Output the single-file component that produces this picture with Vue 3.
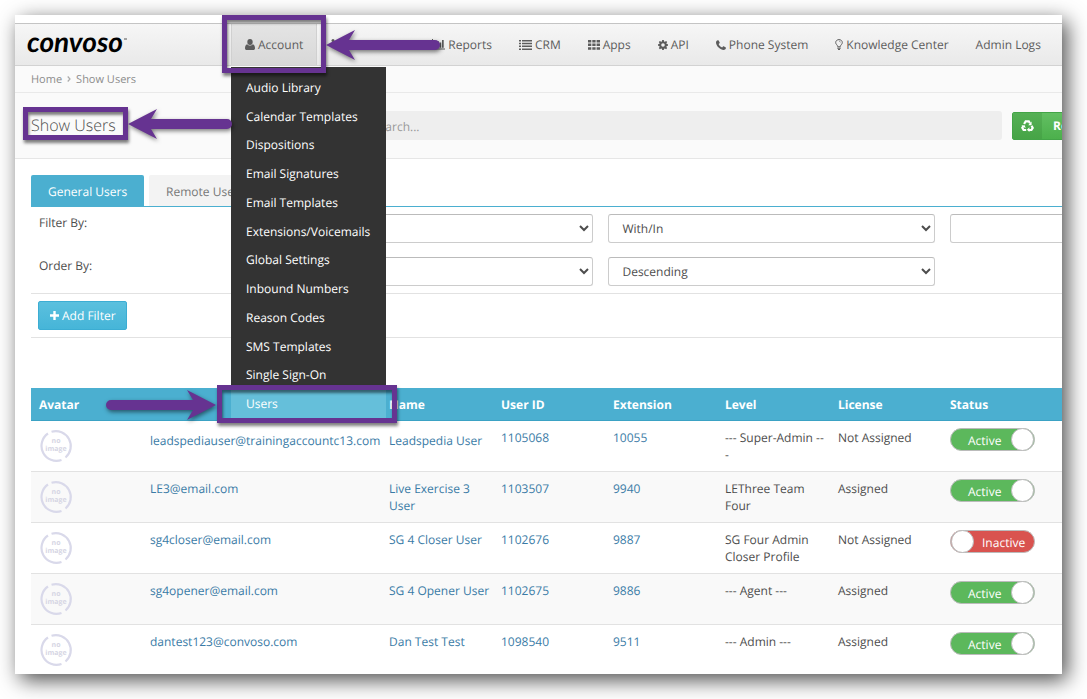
<script setup>
import { reactive } from 'vue'

const navItems = [
  { icon: 'user', label: 'Account', kind: 'current' },
  { icon: 'signal', label: '', kind: 'blank' },
  { icon: 'chart', label: 'Reports' },
  { icon: 'list', label: 'CRM' },
  { icon: 'grid', label: 'Apps' },
  { icon: 'gear', label: 'API' },
  { icon: 'phone', label: 'Phone System' },
  { icon: 'bulb', label: 'Knowledge Center' },
  { icon: '', label: 'Admin Logs' },
]

const menuItems = [
  'Audio Library',
  'Calendar Templates',
  'Dispositions',
  'Email Signatures',
  'Email Templates',
  'Extensions/Voicemails',
  'Global Settings',
  'Inbound Numbers',
  'Reason Codes',
  'SMS Templates',
  'Single Sign-On',
  'Users',
]

const users = reactive([
  { email: 'leadspediauser@trainingaccountc13.com', name: 'Leadspedia User', id: '1105068', ext: '10055', level: '--- Super-Admin ---', license: 'Not Assigned', active: true, owner: true },
  { email: 'LE3@email.com', name: 'Live Exercise 3 User', id: '1103507', ext: '9940', level: 'LEThree Team Four', license: 'Assigned', active: true },
  { email: 'sg4closer@email.com', name: 'SG 4 Closer User', id: '1102676', ext: '9887', level: 'SG Four Admin Closer Profile', license: 'Not Assigned', active: false },
  { email: 'sg4opener@email.com', name: 'SG 4 Opener User', id: '1102675', ext: '9886', level: '--- Agent ---', license: 'Assigned', active: true },
  { email: 'dantest123@convoso.com', name: 'Dan Test Test', id: '1098540', ext: '9511', level: '--- Admin ---', license: 'Assigned', active: true },
])
</script>

<template>
  <div class="stage">
    <div class="window">
      <header class="navbar">
        <a class="brand" href="#">
          <svg width="104" height="30" viewBox="0 0 104 30" role="img" aria-label="convoso">
            <text class="brand-word" x="0" y="21">convoso</text>
            <path d="M97 8h3" stroke="#555" stroke-width="1" />
          </svg>
        </a>
        <nav class="nav">
          <a v-for="(item, i) in navItems" :key="i" href="#" class="nav-item" :class="item.kind">
            <svg v-if="item.icon === 'user'" width="10" height="11" viewBox="0 0 10 11"><ellipse cx="5" cy="3" rx="2.7" ry="3" /><path d="M2.2 5.2C.6 5.6 0 7.3 0 9.2 0 10.300 .7 11 1.700 11h6.600C9.300 11 10 10.300 10 9.200 10 7.300 9.400 5.600 7.800 5.200 6.500 7 3.500 7 2.200 5.200z" /></svg>
            <svg v-else-if="item.icon === 'signal'" width="10" height="11" viewBox="0 0 10 11"><circle cx="2" cy="1.500" r="1.500" /></svg>
            <svg v-else-if="item.icon === 'chart'" width="13" height="11" viewBox="0 0 13 11"><path d="M0 0h1v9.500h12v1H0zM2.500 5h1.700v3.700H2.500zM5 2h1.700v6.700H5zM7.500 3.500h1.700v5.200H7.500zM10 1h1.700v7.700H10z" /></svg>
            <svg v-else-if="item.icon === 'list'" width="13" height="10" viewBox="0 0 13 10"><path d="M0 0h2v1.500H0zM3 0h10v1.500H3zM0 2.800h2v1.500H0zM3 2.800h10v1.500H3zM0 5.600h2v1.500H0zM3 5.600h10v1.500H3zM0 8.400h2v1.500H0zM3 8.400h10v1.500H3z" /></svg>
            <svg v-else-if="item.icon === 'grid'" width="12" height="10" viewBox="0 0 12 10"><path d="M0 0h3.300v2.500H0zM4.300 0h3.300v2.500H4.300zM8.600 0H12v2.500H8.600zM0 3.600h3.300v2.500H0zM4.300 3.600h3.300v2.500H4.300zM8.600 3.600H12v2.500H8.600zM0 7.200h3.300v2.500H0zM4.300 7.200h3.300v2.500H4.300zM8.600 7.200H12v2.500H8.600z" /></svg>
            <svg v-else-if="item.icon === 'gear'" width="10" height="10" viewBox="0 0 10 10"><path fill-rule="evenodd" d="M4.200 0h1.600l.3 1.400.8.300L8.100.900l1.100 1.100-.8 1.200.3.800 1.300.3v1.500l-1.300.3-.3.800.8 1.200-1.100 1.100-1.200-.8-.8.300L5.800 10H4.200l-.3-1.300-.8-.3-1.200.8L.8 8.100l.8-1.200-.3-.8L0 5.800V4.300L1.300 4l.3-.8L.8 2 1.900.900l1.200.8.8-.3zM5 3.200a1.800 1.800 0 1 0 0 3.600 1.800 1.800 0 0 0 0-3.600z" /></svg>
            <svg v-else-if="item.icon === 'phone'" width="10" height="10" viewBox="0 0 10 10"><path d="M1.800.2C.8.400 0 1.300 0 2.400 0 3.900 1.100 6 2.600 7.500 4.100 9 6.100 10 7.600 10c1.100 0 2-.7 2.300-1.700.1-.4.100-.6-.1-.8L7.700 6.300c-.3-.1-.5 0-.7.200l-.8 1c-1.500-.7-2.900-2-3.600-3.600l.9-.7c.3-.2.3-.5.200-.8L2.600.5C2.400.100 2.200.100 1.800.2z" /></svg>
            <svg v-else-if="item.icon === 'bulb'" width="8" height="11" viewBox="0 0 8 11"><path d="M2.600 7.300C2.500 5.900.7 5.400.7 3.500.7 1.800 2.200.6 4 .6s3.300 1.200 3.300 2.900c0 1.900-1.800 2.400-1.900 3.800" fill="none" stroke="#5c5c5c" /><path d="M2.300 7.200h3.400v1H2.300zM2.300 8.700h3.400v1H2.300zM3 10h2v1H3z" /><path d="M4 2.200c.8 0 1.500.5 1.500 1.200" fill="none" stroke="#5c5c5c" stroke-width=".6" /></svg>
            <span v-if="item.label">{{ item.label }}</span>
          </a>
        </nav>
      </header>

      <ul class="dropdown">
        <li v-for="item in menuItems" :key="item">
          <a href="#" :class="{ chosen: item === 'Users' }">{{ item }}</a>
        </li>
      </ul>

      <nav class="crumbs">
        <a href="#">Home</a>
        <svg width="4" height="6" viewBox="0 0 4 6"><path d="M.700.500 3 3 .700 5.500" fill="none" stroke="#aaa" stroke-width="1.200" /></svg>
        <a href="#">Show Users</a>
      </nav>

      <section class="page-head">
        <h1>Show Users</h1>
        <input class="search" type="text" placeholder="Search..." aria-label="Search" />
        <div class="refresh-slot">
          <button class="refresh" type="button">
            <span class="refresh-icon">
              <svg width="13" height="12" viewBox="0 0 13 12"><g fill="none" stroke="#fff" stroke-width="2.200"><path d="M3.100 4 4.700 1.300H7.800L9 3.300" /><path d="M10.600 5.800 11.700 7.900 10.400 10H7.600" /><path d="M5.200 10H2.600L1.300 7.800 2.400 6" /></g><path d="M10.600 1.600v3.600H7.200zM8.400 7.300V12L5.900 9.800zM.3 5.400l3.400-.2 1 3z" fill="#fff" /></svg>
            </span>
            <span class="refresh-text">Refresh</span>
          </button>
        </div>
      </section>

      <main class="content">
        <div class="tabs">
          <button type="button" class="tab on">General Users</button>
          <button type="button" class="tab">Remote Users</button>
        </div>

        <form class="filters" @submit.prevent>
          <div class="filter-row">
            <label for="filter-field">Filter By:</label>
            <select id="filter-field"><option></option></select>
            <select aria-label="Filter match"><option>With/In</option></select>
            <input type="text" aria-label="Filter value" />
          </div>
          <div class="filter-row">
            <label for="order-field">Order By:</label>
            <select id="order-field"><option></option></select>
            <select aria-label="Order direction"><option>Descending</option></select>
          </div>
          <div class="filter-actions">
            <button type="button" class="add">
              <svg width="9" height="9" viewBox="0 0 9 9"><path d="M3.300 0h2.400v3.300H9v2.400H5.700V9H3.300V5.700H0V3.300h3.300z" fill="#fff" /></svg>
              Add Filter
            </button>
          </div>
        </form>

        <table>
          <colgroup>
            <col class="c-avatar" /><col class="c-email" /><col class="c-std" /><col class="c-std" /><col class="c-std" /><col class="c-level" /><col class="c-std" /><col />
          </colgroup>
          <thead>
            <tr><th>Avatar</th><th></th><th>Name</th><th>User ID</th><th>Extension</th><th>Level</th><th>License</th><th>Status</th></tr>
          </thead>
          <tbody>
            <tr v-for="u in users" :key="u.id" :class="{ owner: u.owner }">
              <td>
                <svg class="avatar" width="34" height="34" viewBox="0 0 34 34" role="img" aria-label="no image">
                  <g fill="none" stroke="#d9d9ea" stroke-width="2.200">
                    <path d="M12.500 2.700A15 15 0 0 1 26.500 28.500" />
                    <path d="M22.500 31A15 15 0 0 1 9 4.500" />
                  </g>
                  <text x="17" y="14">no</text>
                  <text x="17" y="22">image</text>
                </svg>
              </td>
              <td class="key"><a href="#">{{ u.email }}</a></td>
              <td class="key"><a href="#">{{ u.name }}</a></td>
              <td><a href="#">{{ u.id }}</a></td>
              <td><a href="#">{{ u.ext }}</a></td>
              <td>{{ u.level }}</td>
              <td>{{ u.license }}</td>
              <td class="status">
                <label class="toggle" :class="{ off: !u.active }">
                  <input v-model="u.active" type="checkbox" />
                  <span>{{ u.active ? 'Active' : 'Inactive' }}</span>
                  <i></i>
                </label>
              </td>
            </tr>
          </tbody>
        </table>
      </main>
    </div>

    <div class="mark mark-account"></div>
    <div class="mark mark-title"></div>
    <div class="mark mark-users"></div>
    <svg class="arrow arrow-account" width="116" height="32" viewBox="0 0 116 32"><path d="M0 15 29 0 23 10H109a5 5 0 0 1 0 10H23L29 30z" /></svg>
    <svg class="arrow arrow-title" width="106" height="32" viewBox="0 0 106 32"><path d="M0 15 29 0 23 10H99a5 5 0 0 1 0 10H23L29 30z" /></svg>
    <svg class="arrow arrow-users" width="112" height="32" viewBox="0 0 112 32"><path d="M110 15 81 0 87 10H5a5 5 0 0 0 0 10H87L81 30z" /></svg>
  </div>
</template>

<style>
body {
  margin: 0;
  background: #fff;
}
</style>

<style scoped>
* {
  box-sizing: border-box;
}
.stage {
  position: relative;
  height: 100vh;
  padding: 15px 25px 25px 15px;
  overflow: hidden;
  font: 12px/17px "Open Sans", "Noto Sans", sans-serif;
  text-rendering: geometricPrecision;
  color: #4d4d4d;
}
a {
  text-decoration: none;
  color: #3a7ba6;
}
input,
select,
button {
  font: inherit;
  text-rendering: inherit;
}
.window {
  position: relative;
  height: 100%;
  padding-top: 8px;
  overflow: hidden;
  background: #fff;
}
.stage::before {
  content: "";
  position: absolute;
  inset: 15px 25px 25px 15px;
  box-shadow: 5px 6px 20px rgba(0, 0, 0, 0.7);
}
.navbar {
  display: flex;
  height: 43px;
  border-top: 1px solid #c4c4c4;
  border-bottom: 1px solid #d2d2d2;
  background: linear-gradient(#f6f6f6, #e9e9e9);
}
.brand {
  flex: none;
  width: 216px;
  padding: 7px 0 0 12px;
}
.brand svg {
  overflow: visible;
}
.brand-word {
  font: italic 700 28px Lato, sans-serif;
  fill: #000;
}
.nav {
  display: flex;
}
.nav-item {
  display: flex;
  flex: none;
  align-items: center;
  gap: 3px;
  padding: 0 13px 0 14px;
  white-space: nowrap;
  color: #5c5c5c;
}
.nav-item svg {
  fill: #5c5c5c;
}
.nav-item.current {
  padding: 0 13px;
  border: solid #d0d0d0;
  border-width: 0 1px;
  background: linear-gradient(#e4e4e4, #d8d8d8);
}
.nav-item.blank {
  width: 101px;
}
.dropdown {
  position: absolute;
  z-index: 2;
  top: 52px;
  left: 216px;
  display: grid;
  grid-auto-rows: 1fr;
  width: 155px;
  height: 356px;
  margin: 0;
  padding: 6px 0 5px;
  list-style: none;
  background: #333;
}
.dropdown li {
  display: grid;
}
.dropdown a {
  display: flex;
  align-items: center;
  padding-left: 15px;
  color: #fff;
}
.dropdown .chosen {
  background: #65bfda;
}
.crumbs {
  display: flex;
  align-items: center;
  gap: 5px;
  height: 27px;
  padding-left: 16px;
  border-bottom: 1px solid #e9e9e9;
  background: #fafafa;
  font-size: 11px;
}
.crumbs a {
  color: #8c8c8c;
}
.page-head {
  display: grid;
  grid-template-columns: 316px 1fr 50px;
  column-gap: 10px;
  align-items: center;
  height: 66px;
  padding-left: 16px;
  border-bottom: 1px solid #e6e6e6;
  background: #fafafa;
}
h1 {
  margin: 0;
  padding-bottom: 2px;
  font-size: 16px;
  font-weight: 300;
  line-height: 24px;
}
.search {
  width: 100%;
  height: 29px;
  padding: 2px 15px 0;
  border: 0;
  border-radius: 3px;
  background: #eee;
}
.search::placeholder {
  color: #999;
}
.refresh {
  display: flex;
  width: 110px;
  height: 28px;
  padding: 0;
  border: 1px solid #43a447;
  border-radius: 2px;
  background: linear-gradient(#62bf62, #4cb04c);
  color: #fff;
  font-weight: 700;
  line-height: 26px;
}
.refresh-icon {
  display: grid;
  place-items: center;
  width: 29px;
  height: 100%;
  background: linear-gradient(#55b055, #46a446);
}
.refresh-text {
  padding-left: 11px;
}
.content {
  padding: 16px 0 0 16px;
}
.tabs {
  display: flex;
  gap: 5px;
  border-bottom: 1px solid #4bafd0;
}
.tab {
  height: 31px;
  padding: 2px 17px 0;
  border: 0;
  border-radius: 2px 2px 0 0;
  background: #f3f3f3;
  color: #777;
}
.tab.on {
  background: #4bafd0;
  color: #fff;
}
.filters {
  margin-bottom: 50px;
}
.filter-row {
  display: grid;
  grid-template-columns: 221fr 327fr 327fr 112fr;
  column-gap: 15px;
  height: 43px;
  padding-top: 7px;
}
.filter-row label {
  padding-left: 8px;
}
.filter-row select,
.filter-row input {
  min-width: 0;
  height: 29px;
  padding: 0 9px;
  border: 1px solid #ccc;
  border-top-color: #bbb;
  border-radius: 3px;
  background: #fff;
  color: #4d4d4d;
}
.filter-row input {
  margin-right: -10px;
}
.filter-actions {
  padding: 7px;
  border: solid #e2e2e2;
  border-width: 1px 0;
}
.add {
  display: flex;
  align-items: center;
  gap: 3px;
  height: 29px;
  padding: 0 10px 0 11px;
  border: 1px solid #3cadd3;
  border-radius: 2px;
  background: linear-gradient(#5bc0de, #46b5d8);
  color: #fff;
}
table {
  width: 100%;
  border-collapse: separate;
  border-spacing: 0;
  table-layout: fixed;
}
.c-avatar {
  width: 111px;
}
.c-email {
  width: 239px;
}
.c-std {
  width: 112px;
}
.c-level {
  width: 113px;
}
th {
  height: 33px;
  padding: 0 8px;
  border-bottom: 1px solid #3ba2c4;
  background: #4bafd0;
  color: #fff;
  text-align: left;
}
td {
  height: 51px;
  padding: 8px 6px 0 8px;
  border-bottom: 1px solid #e2e2e2;
  vertical-align: top;
}
tbody tr:nth-child(even) td {
  background: #f9f9f9;
}
td.key {
  padding-right: 2px;
}
.owner .key {
  line-height: 24px;
  white-space: nowrap;
}
.avatar {
  display: block;
}
.avatar text {
  font: 700 7px "Open Sans", sans-serif;
  fill: #d6d6e4;
  text-anchor: middle;
}
td.status {
  padding-top: 7px;
}
.toggle {
  position: relative;
  display: block;
  width: 85px;
  height: 23px;
  border: 1px solid #bbb;
  border-radius: 12px;
  background: #5cb85c;
  color: #fff;
  line-height: 23px;
}
.toggle.off {
  background: #d9534f;
}
.toggle input {
  position: absolute;
  inset: 0;
  margin: 0;
  opacity: 0;
}
.toggle span {
  display: block;
  padding-left: 17px;
}
.toggle.off span {
  padding-left: 31px;
}
.toggle i {
  position: absolute;
  top: -1px;
  right: 0;
  width: 23px;
  height: 23px;
  border: 1px solid #bbb;
  border-radius: 50%;
  background: #fff;
}
.toggle.off i {
  right: auto;
  left: 0;
}
.mark {
  position: absolute;
  z-index: 3;
  border: 5px solid #663391;
  box-shadow: 1px 3px 3px rgba(0, 0, 0, 0.5), inset 1px 3px 3px rgba(0, 0, 0, 0.5);
  pointer-events: none;
}
.mark-account {
  top: 15px;
  left: 222px;
  width: 104px;
  height: 58px;
}
.mark-title {
  top: 107px;
  left: 23px;
  width: 105px;
  height: 33px;
}
.mark-users {
  top: 385px;
  left: 217px;
  width: 180px;
  height: 38px;
}
.arrow {
  position: absolute;
  z-index: 3;
  overflow: visible;
  fill: #663391;
  filter: drop-shadow(1px 2px 2px rgba(0, 0, 0, 0.5));
  pointer-events: none;
}
.arrow-account {
  top: 30px;
  left: 326px;
}
.arrow-title {
  top: 109px;
  left: 128px;
}
.arrow-users {
  top: 390px;
  left: 106px;
}
</style>
